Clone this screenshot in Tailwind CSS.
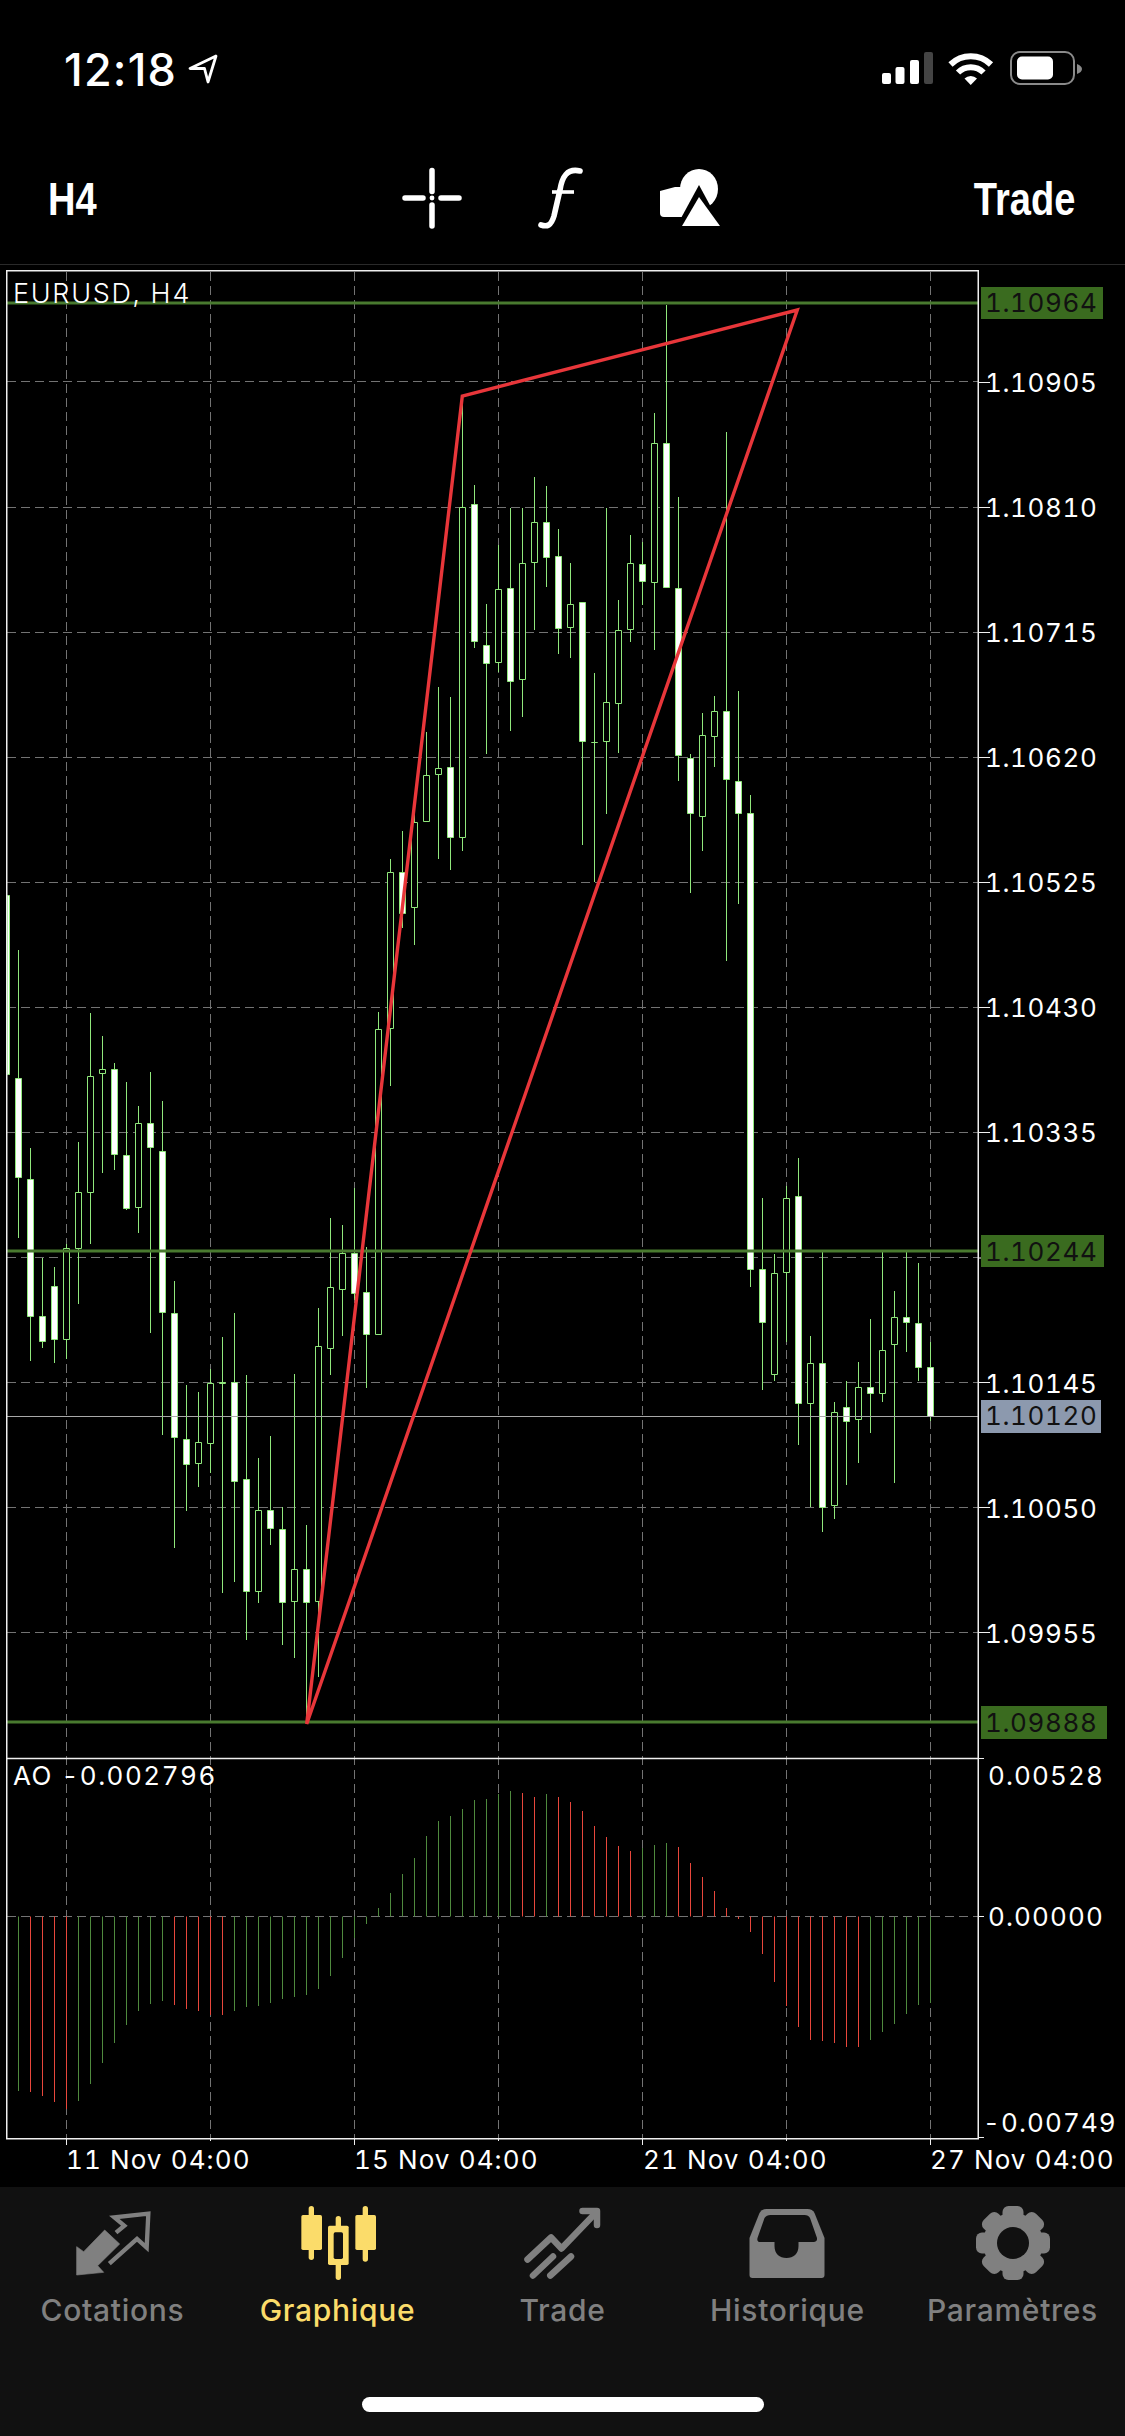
<!doctype html>
<html lang="fr">
<head>
<meta charset="utf-8">
<title>EURUSD, H4</title>
<script src="https://cdn.jsdelivr.net/npm/@tailwindcss/browser@4"></script>
</head>
<body class="bg-black">
<div class="w-[1125px] h-[2436px] bg-black flex flex-col overflow-hidden text-white font-['Inter',sans-serif]">

  <!-- status bar -->
  <div class="h-[132px] pt-[6px] flex items-center pl-[64px] pr-[40px]">
    <span class="w-[123px] text-[45px] leading-none font-medium tracking-[1.2px]">12:18</span>
    <svg width="32" height="34" viewBox="187 52 32 34"><path d="M216 56 L190 68.5 H204.5 L208 82 Z" fill="none" stroke="#fff" stroke-width="2.8" stroke-linejoin="round"/></svg>
    <svg class="ml-auto" width="205" height="40" viewBox="880 50 205 40">
      <rect x="882" y="74" width="9" height="11" rx="2" fill="#fff"/>
      <rect x="895.5" y="68" width="9" height="17" rx="2" fill="#fff"/>
      <rect x="910" y="61" width="9" height="24" rx="2" fill="#fff"/>
      <rect x="924" y="53" width="9" height="32" rx="2" fill="#444"/>
      <path d="M950.5 65.5 A29 29 0 0 1 991 65.5 M958 73.5 A18 18 0 0 1 983.5 73.5" fill="none" stroke="#fff" stroke-width="6"/>
      <path d="M964.5 79.5 A9 9 0 0 1 977 79.5 L970.7 86 Z" fill="#fff"/>
      <rect x="1011" y="53" width="63" height="32" rx="9" fill="none" stroke="#8a8a8a" stroke-width="2"/>
      <rect x="1017" y="57.5" width="36" height="23" rx="5" fill="#fff"/>
      <path d="M1077 65 C1080 66 1082 68 1082 70 C1082 72 1080 74 1077 75 Z" fill="#8a8a8a"/>
    </svg>
  </div>

  <!-- toolbar -->
  <div class="h-[132px] flex items-center pl-[48px] pr-[50px]">
    <div class="w-[354px]"><span class="inline-block origin-left scale-x-[.81] text-[47px] leading-none font-bold font-['Liberation_Sans',sans-serif]">H4</span></div>
    <svg width="318" height="66" viewBox="402 165 318 66" class="shrink-0">
      <path d="M432 170.5V191.5M432 205V226M405 198H423M441 198H459" stroke="#fff" stroke-width="5.5" stroke-linecap="round" fill="none"/>
      <circle cx="432" cy="198" r="2.4" fill="#fff"/>
      <path d="M580 171 C567 168 562 177 560 190 L554 216 C551 226 547 227 541 225" stroke="#fff" stroke-width="5.6" fill="none" stroke-linecap="round"/>
      <path d="M552 192H574" stroke="#fff" stroke-width="3.6"/>
      <path d="M660 191 L675 187 H692 V217 H664 Q660 217 660 213 Z" fill="#fff"/>
      <ellipse cx="699" cy="189" rx="19" ry="20" fill="#fff"/>
      <path d="M699 185 L674 231 H724 Z" fill="#000"/>
      <path d="M699 197 L720 226 H682 Z" fill="#fff"/>
    </svg>
    <div class="ml-auto"><span class="inline-block origin-right scale-x-[.81] text-[47px] leading-none font-bold font-['Liberation_Sans',sans-serif]">Trade</span></div>
  </div>

  <!-- chart -->
  <svg width="1125" height="1923" viewBox="0 264 1125 1923" class="block shrink-0">
    <path d="M0 264.5H1125" stroke="#2a2a2a" stroke-width="1"/>

    <!-- grid -->
    <g stroke="#737373" stroke-width="1" fill="none" stroke-dasharray="9 5">
      <path d="M66.5 272V2139M210.5 272V2139M354.5 272V2139M498.5 272V2139M642.5 272V2139M786.5 272V2139M930.5 272V2139"/>
      <path d="M7 381.5H978M7 507.5H978M7 632.5H978M7 757.5H978M7 882.5H978M7 1007.5H978M7 1132.5H978M7 1257.5H978M7 1382.5H978M7 1507.5H978M7 1632.5H978M7 1916.5H978"/>
    </g>

    <!-- AO histogram -->
    <path fill="none" stroke="#4f8a3e" stroke-width="1" d="M18.5 1916.5V2091M78.5 1916.5V2101M90.5 1916.5V2084M102.5 1916.5V2063M114.5 1916.5V2043M126.5 1916.5V2025M138.5 1916.5V2011M150.5 1916.5V2004M162.5 1916.5V2001M234.5 1916.5V2011M246.5 1916.5V2007M258.5 1916.5V2006M270.5 1916.5V2003M282.5 1916.5V1999M294.5 1916.5V1997M306.5 1916.5V1995M318.5 1916.5V1989M330.5 1916.5V1976M342.5 1916.5V1958M354.5 1916.5V1938M366.5 1916.5V1924M378.5 1916.5V1908M390.5 1916.5V1893M402.5 1916.5V1874M414.5 1916.5V1858M426.5 1916.5V1836M438.5 1916.5V1821M450.5 1916.5V1816M462.5 1916.5V1809M474.5 1916.5V1800M486.5 1916.5V1799M498.5 1916.5V1794M510.5 1916.5V1791M546.5 1916.5V1794M642.5 1916.5V1848M654.5 1916.5V1845M666.5 1916.5V1843M870.5 1916.5V2040M882.5 1916.5V2032M894.5 1916.5V2024M906.5 1916.5V2014M918.5 1916.5V2005M930.5 1916.5V2003"/>
    <path fill="none" stroke="#e8473c" stroke-width="1" d="M30.5 1916.5V2092M42.5 1916.5V2096M54.5 1916.5V2102M66.5 1916.5V2109M174.5 1916.5V2005M186.5 1916.5V2009M198.5 1916.5V2011M210.5 1916.5V2015M222.5 1916.5V2015M522.5 1916.5V1793M534.5 1916.5V1797M558.5 1916.5V1797M570.5 1916.5V1802M582.5 1916.5V1811M594.5 1916.5V1826M606.5 1916.5V1837M618.5 1916.5V1846M630.5 1916.5V1851M678.5 1916.5V1847M690.5 1916.5V1863M702.5 1916.5V1877M714.5 1916.5V1891M726.5 1916.5V1908M738.5 1916.5V1919M750.5 1916.5V1932M762.5 1916.5V1954M774.5 1916.5V1982M786.5 1916.5V2006M798.5 1916.5V2027M810.5 1916.5V2040M822.5 1916.5V2041M834.5 1916.5V2043M846.5 1916.5V2047M858.5 1916.5V2047"/>

    <!-- wicks -->
    <path fill="none" stroke="#90e87c" stroke-width="1" d="M18.5 950V1238M30.5 1148V1361M42.5 1258V1348M54.5 1267V1363M66.5 1244V1359M78.5 1142V1304M90.5 1013V1244M102.5 1036V1173M114.5 1063V1170M126.5 1082V1210M138.5 1106V1233M150.5 1072V1333M162.5 1101V1435M174.5 1281V1548M186.5 1385V1511M198.5 1392V1487M210.5 1369V1473M222.5 1337V1593M234.5 1313V1582M246.5 1375V1640M258.5 1458V1603M270.5 1436V1545M282.5 1507V1645M294.5 1374V1658M306.5 1525V1723M318.5 1308V1677M330.5 1218V1375M342.5 1225V1336M354.5 1188V1300M366.5 1247V1388M378.5 1012V1334M390.5 859V1086M402.5 831V928M414.5 800V945M426.5 732V821M438.5 687V859M450.5 697V870M462.5 397V851M474.5 485V648M486.5 604V754M498.5 545V672M510.5 508V731M522.5 508V717M534.5 477V630M546.5 486V587M558.5 529V654M570.5 563V658M582.5 602V845M594.5 673V882M606.5 508V814M618.5 600V753M630.5 535V642M642.5 542V605M654.5 413V650M666.5 305V588M678.5 497V781M690.5 754V893M702.5 713V851M714.5 696V767M726.5 432V961M738.5 691V904M750.5 795V1287M762.5 1198V1390M774.5 1254V1381M786.5 1186V1342M798.5 1158V1445M810.5 1336V1507M822.5 1252V1532M834.5 1402V1519M846.5 1381V1485M858.5 1362V1463M870.5 1319V1433M882.5 1252V1402M894.5 1291V1483M906.5 1252V1352M918.5 1263V1381M930.5 1342V1421"/>

    <!-- candle bodies -->
    <g transform="translate(0 .5)" stroke="#90e87c" stroke-width="1">
      <path fill="#000" d="M63.5 1248h6V1339h-6zM75.5 1192h6V1248h-6zM87.5 1076h6V1192h-6zM99.5 1069h6V1073h-6zM135.5 1123h6V1207h-6zM195.5 1442h6V1463h-6zM207.5 1383h6V1443h-6zM219.5 1382h6V1383h-6zM255.5 1510h6V1591h-6zM291.5 1569h6V1601h-6zM315.5 1346h6V1601h-6zM327.5 1287h6V1348h-6zM339.5 1253h6V1289h-6zM375.5 1029h6V1334h-6zM387.5 872h6V1028h-6zM411.5 822h6V907h-6zM423.5 775h6V821h-6zM435.5 768h6V774h-6zM459.5 507h6V837h-6zM495.5 589h6V662h-6zM519.5 563h6V679h-6zM531.5 522h6V562h-6zM567.5 604h6V627h-6zM591.5 742h6V742h-6zM603.5 702h6V741h-6zM615.5 630h6V703h-6zM627.5 563h6V629h-6zM651.5 443h6V582h-6zM699.5 735h6V816h-6zM711.5 711h6V736h-6zM771.5 1273h6V1374h-6zM783.5 1198h6V1272h-6zM807.5 1363h6V1403h-6zM831.5 1412h6V1505h-6zM855.5 1387h6V1419h-6zM879.5 1350h6V1393h-6zM891.5 1317h6V1344h-6z"/>
      <path fill="#fff" d="M7.5 895h2V1074h-2zM15.5 1078h6V1177h-6zM27.5 1179h6V1316h-6zM39.5 1316h6V1341h-6zM51.5 1286h6V1339h-6zM111.5 1069h6V1154h-6zM123.5 1155h6V1208h-6zM147.5 1123h6V1147h-6zM159.5 1151h6V1312h-6zM171.5 1313h6V1437h-6zM183.5 1439h6V1464h-6zM231.5 1382h6V1481h-6zM243.5 1479h6V1591h-6zM267.5 1510h6V1528h-6zM279.5 1529h6V1602h-6zM303.5 1569h6V1602h-6zM351.5 1253h6V1293h-6zM363.5 1292h6V1334h-6zM399.5 872h6V913h-6zM447.5 767h6V837h-6zM471.5 504h6V641h-6zM483.5 645h6V663h-6zM507.5 588h6V681h-6zM543.5 522h6V557h-6zM555.5 556h6V628h-6zM579.5 602h6V741h-6zM639.5 564h6V581h-6zM663.5 443h6V587h-6zM675.5 588h6V755h-6zM687.5 758h6V813h-6zM723.5 711h6V779h-6zM735.5 781h6V813h-6zM747.5 813h6V1269h-6zM759.5 1269h6V1322h-6zM795.5 1196h6V1403h-6zM819.5 1363h6V1507h-6zM843.5 1407h6V1421h-6zM867.5 1387h6V1393h-6zM903.5 1317h6V1322h-6zM915.5 1323h6V1367h-6zM927.5 1367h6V1416h-6z"/>
    </g>

    <!-- level lines -->
    <path d="M7 303H978M7 1251H978M7 1722H978" stroke="#497a2f" stroke-width="3"/>
    <path d="M7 1416.5H978" stroke="#a8a8a8" stroke-width="1"/>

    <!-- trend triangle -->
    <path d="M306.7 1724L462.3 396L797.3 310Z" fill="none" stroke="#e8363a" stroke-width="3.4" stroke-linejoin="miter"/>

    <!-- frame and ticks -->
    <g fill="none" stroke="#efefef" stroke-width="1.5">
      <path d="M6.75 270.75H978.25V2138.75H6.75Z"/>
      <path d="M7 1758.5H978"/>
    </g>
    <path d="M978 382.5h12M978 507.5h12M978 632.5h12M978 757.5h12M978 882.5h12M978 1007.5h12M978 1132.5h12M978 1382.5h12M978 1507.5h12M978 1632.5h12M978 1258h4M978 1758.5h6M978 1916.5h6M978 2137.5h6M66.5 2139v6M210.5 2139v2M354.5 2139v6M498.5 2139v2M642.5 2139v6M786.5 2139v2M930.5 2139v6" stroke="#efefef" stroke-width="1" fill="none"/>

    <!-- highlighted levels -->
    <rect x="981" y="287" width="122" height="32" fill="#3a6b1f"/>
    <rect x="981" y="1235" width="123" height="32" fill="#3a6b1f"/>
    <rect x="981" y="1400" width="120" height="33" fill="#8c99ae"/>
    <rect x="981" y="1706" width="126" height="33" fill="#3a6b1f"/>

    <g class="font-['Inter',sans-serif] text-[26px] tabular-nums tracking-[.6px] fill-white">
      <text x="13" y="302.5" class="text-[27px] tracking-[1.7px] font-light">EURUSD, H4</text>
      <text x="985" y="391.5">1.10905</text>
      <text x="985" y="516.5">1.10810</text>
      <text x="985" y="641.5">1.10715</text>
      <text x="985" y="766.5">1.10620</text>
      <text x="985" y="891.5">1.10525</text>
      <text x="985" y="1016.5">1.10430</text>
      <text x="985" y="1141.5">1.10335</text>
      <text x="985" y="1392.5">1.10145</text>
      <text x="985" y="1517.5">1.10050</text>
      <text x="985" y="1642.5">1.09955</text>
      <text x="985" y="312" class="fill-[#111]">1.10964</text>
      <text x="985" y="1260.5" class="fill-[#111]">1.10244</text>
      <text x="985" y="1425" class="fill-[#111]">1.10120</text>
      <text x="985" y="1731.5" class="fill-[#111]">1.09888</text>
      <text x="13" y="1785" class="tracking-[1.5px]">AO -0.002796</text>
      <text x="988" y="1785" class="tracking-[1.1px]">0.00528</text>
      <text x="988" y="1926" class="tracking-[1.1px]">0.00000</text>
      <text x="983" y="2132" class="tracking-[1.1px]">-0.00749</text>
      <text x="66" y="2169" class="tracking-[1.1px]">11 Nov 04:00</text>
      <text x="354" y="2169" class="tracking-[1.1px]">15 Nov 04:00</text>
      <text x="643" y="2169" class="tracking-[1.1px]">21 Nov 04:00</text>
      <text x="930" y="2169" class="tracking-[1.1px]">27 Nov 04:00</text>
    </g>
  </svg>

  <!-- tab bar -->
  <div class="flex-1 bg-[#111111] flex flex-col">
    <div class="grid grid-cols-5 pt-[13px] text-[#808080] text-[30px] leading-none font-medium tracking-[.7px]">
      <div class="flex flex-col items-center">
        <svg width="90" height="90" viewBox="21 15 270 270" class="block">
          <path d="M47 155 L47 240 L128 232 L110 212 L176 147 L131 105 L68 170 Z" fill="#808080" stroke="#808080" stroke-width="2" stroke-linejoin="round"/>
          <path d="M145 206 L228 132 L257 158 L262 56 L160 67 L190 92 L165 113" fill="none" stroke="#808080" stroke-width="13"/>
        </svg>
        <span class="mt-[5px]">Cotations</span>
      </div>
      <div class="flex flex-col items-center text-[#fbdc6a]">
        <svg width="90" height="90" viewBox="693 15 270 270" class="block">
          <g fill="#fbdc6a">
            <rect x="740" y="33" width="16" height="162" rx="8"/>
            <rect x="718" y="60" width="62" height="105" rx="5"/>
            <rect x="821" y="63" width="16" height="192" rx="8"/>
            <rect x="798" y="92" width="62" height="118" rx="5"/>
            <rect x="902" y="33" width="16" height="167" rx="8"/>
            <rect x="880" y="60" width="62" height="105" rx="5"/>
          </g>
          <rect x="815" y="112" width="28" height="80" rx="5" fill="#111"/>
        </svg>
        <span class="mt-[5px]">Graphique</span>
      </div>
      <div class="flex flex-col items-center">
        <svg width="90" height="90" viewBox="517.5 2200 90 90" class="block">
          <g fill="none" stroke="#808080" stroke-width="6.5" stroke-linecap="round" stroke-linejoin="round">
            <path d="M527 2259.5L550.6 2237.5L561 2248.5L596 2212"/>
            <path d="M582 2211H596.5V2225"/>
            <path d="M532.5 2275.5L552.5 2256.5M549.8 2275.5L570.5 2256.5"/>
          </g>
        </svg>
        <span class="mt-[5px]">Trade</span>
      </div>
      <div class="flex flex-col items-center">
        <svg width="90" height="90" viewBox="742.5 2200 90 90" class="block">
          <path d="M766 2209H807Q812 2209 814 2213L824 2238V2275Q824 2278 821 2278H752Q749 2278 749 2275V2238L759 2213Q761 2209 766 2209Z" fill="#808080"/>
          <path d="M770 2215H804Q808 2215 809.5 2218L816.5 2238Q817 2242 813 2242H798V2246C798 2254 793 2258 786 2258C779 2258 774 2254 774 2246V2242H760Q756 2242 757 2238L764 2218Q766 2215 770 2215Z" fill="#111"/>
        </svg>
        <span class="mt-[5px]">Historique</span>
      </div>
      <div class="flex flex-col items-center">
        <svg width="90" height="90" viewBox="966.5 2200 90 90" class="block">
          <g fill="#808080">
            <circle cx="1011.5" cy="2243" r="30"/>
            <rect x="1001" y="2206" width="21" height="16" rx="6"/>
            <rect x="1001" y="2206" width="21" height="16" rx="6" transform="rotate(45 1011.5 2243)"/>
            <rect x="1001" y="2206" width="21" height="16" rx="6" transform="rotate(90 1011.5 2243)"/>
            <rect x="1001" y="2206" width="21" height="16" rx="6" transform="rotate(135 1011.5 2243)"/>
            <rect x="1001" y="2206" width="21" height="16" rx="6" transform="rotate(180 1011.5 2243)"/>
            <rect x="1001" y="2206" width="21" height="16" rx="6" transform="rotate(225 1011.5 2243)"/>
            <rect x="1001" y="2206" width="21" height="16" rx="6" transform="rotate(270 1011.5 2243)"/>
            <rect x="1001" y="2206" width="21" height="16" rx="6" transform="rotate(315 1011.5 2243)"/>
          </g>
          <circle cx="1011.5" cy="2243" r="16" fill="#111"/>
        </svg>
        <span class="mt-[5px]">Paramètres</span>
      </div>
    </div>
    <div class="mt-auto mb-[24px] mx-auto w-[402px] h-[15px] rounded-full bg-white"></div>
  </div>
</div>
</body>
</html>
